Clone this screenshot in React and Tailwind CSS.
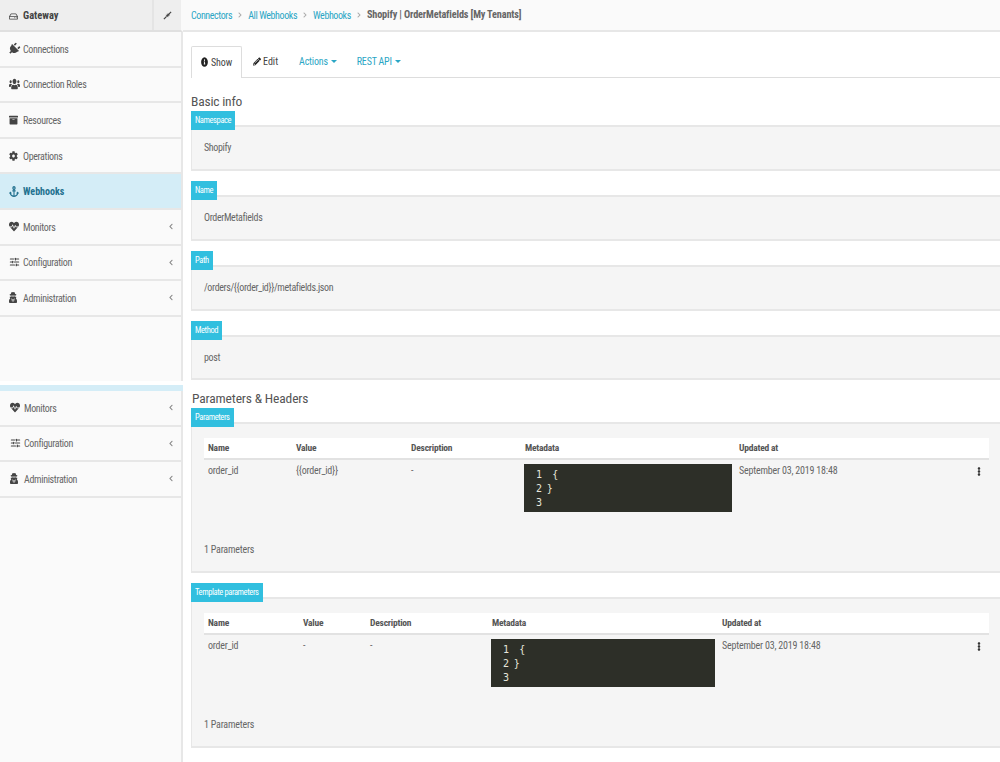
import { FaPlug, FaUsers, FaArchive, FaCog, FaAnchor, FaHeartbeat, FaUserSecret, FaInfoCircle, FaPencilAlt, FaRegHdd, FaEllipsisV, FaChevronLeft, FaChevronRight } from 'react-icons/fa'
import { SlidersHorizontal } from 'lucide-react'

const font = { fontFamily: 'Roboto, "Liberation Sans", Arial, sans-serif' }

function NavRow({ icon: Icon, label, arrow, active, shift, iconClass = 'w-[10px] h-[11px]' }) {
  return (
    <div className={`h-[35.6px] flex items-center border-b-2 border-[#e7e7e7] ${shift ? 'pl-[10px]' : 'pl-[9px]'} pr-[8px] ${active ? 'bg-[#d4edf7] text-[#23718f] font-bold' : 'text-[#666]'}`}>
      <span className={`w-[14px] shrink-0 flex items-center ${active ? '' : 'text-[#444]'}`}>
        <Icon preserveAspectRatio="none" className={iconClass} />
      </span>
      <span className={`text-[10px] leading-none pt-[2px] [font-stretch:75%] ${active ? '' : 'tracking-[-0.35px]'}`}>{label}</span>
      {arrow && <FaChevronLeft className="ml-auto w-[4px] h-[7px] text-[#888]" />}
    </div>
  )
}

function Crumb({ children }) {
  return (
    <>
      <span className="text-[#2ba6c5] text-[10px] tracking-[-0.4px]">{children}</span>
      <FaChevronRight className="w-[4px] h-[6px] mx-[6px] text-[#aaa]" />
    </>
  )
}

function Label({ children }) {
  return (
    <div className="relative z-10 self-start h-[19px] px-[4px] flex items-center bg-[#31bfdf] text-white text-[8.5px] -mb-[5px] tracking-[-0.4px] [font-stretch:75%]">
      {children}
    </div>
  )
}

function Field({ label, value, h = 'h-[46px]' }) {
  return (
    <div className="flex flex-col">
      <Label>{label}</Label>
      <div className={`${h} bg-[#f5f5f5] border-t-2 border-b-2 border-l border-[#e7e7e7] flex items-center pl-[12px] pb-[1px] text-[10px] tracking-[-0.35px] text-[#666] [font-stretch:75%]`}>
        {value}
      </div>
    </div>
  )
}

function CodeBox({ w }) {
  return (
    <div className={`${w} h-[48px] bg-[#2d2f28] text-[#e6e6da] text-[10px] leading-[14px] tracking-[-0.6px] font-['DejaVu_Sans_Mono',monospace] pt-[4px] pl-[12px] whitespace-pre`}>
      <div>1  {'{'}</div>
      <div>2 {'}'}</div>
      <div>3</div>
    </div>
  )
}

function ParamsPanel({ label, cols, value, codeW }) {
  return (
    <div className="flex flex-col">
      <Label>{label}</Label>
      <div className="h-[151px] bg-[#f5f5f5] border-t-2 border-b-2 border-l border-[#e7e7e7] pt-[14px] pl-[12px] pr-[11px] text-[10px] tracking-[-0.2px] text-[#666] [font-stretch:75%]">
        <div className={`grid ${cols} h-[22px] items-center bg-white border-b-2 border-[#e2e2e2] font-bold text-[9.5px] text-[#555]`}>
          <div className="pl-[4px]">Name</div>
          <div>Value</div>
          <div>Description</div>
          <div>Metadata</div>
          <div>Updated at</div>
        </div>
        <div className={`grid ${cols} h-[52px] pt-[3px]`}>
          <div className="pl-[4px]">order_id</div>
          <div>{value}</div>
          <div>-</div>
          <div className="-ml-[1px] pt-[1px]"><CodeBox w={codeW} /></div>
          <div className="flex justify-between items-start">
            <span>September 03, 2019 18:48</span>
            <FaEllipsisV className="w-[8px] h-[9px] mt-[4px] mr-[6px] text-[#333]" />
          </div>
        </div>
        <div className="mt-[30px]">1 Parameters</div>
      </div>
    </div>
  )
}

export default function App() {
  return (
    <div className="w-[1000px] h-[762px] flex bg-white overflow-hidden" style={font}>
      {/* Sidebar */}
      <aside className="w-[183px] shrink-0 flex flex-col">
        <div className="h-[32px] flex items-center bg-[#eeeeee] border-b-2 border-[#e0e0e0] border-r-2 border-r-[#fafafa]">
          <div className="flex-1 flex items-center pl-[9px] pt-[2px] text-[10.5px] font-bold text-[#444] [font-stretch:75%]">
            <FaRegHdd className="w-[9px] h-[9px] mr-[5px]" />
            Gateway
          </div>
          <div className="w-[29px] h-full flex items-center pl-[9px] border-l-2 border-[#e4e4e4]">
            <svg viewBox="0 0 10 10" className="w-[9px] h-[9px] text-[#444]" fill="none" stroke="currentColor">
              <path d="M1 9 L4 6 M6 4 L9 1" strokeWidth="1.4" />
              <path d="M3.2 4.4 L5.6 6.8 L5.6 4.4 Z M4.4 3.2 L6.8 5.6 L6.8 3.2 Z" fill="currentColor" strokeWidth="0.4" />
            </svg>
          </div>
        </div>
        <div className="h-[349px] bg-[#fafafa] border-r-2 border-[#e7e7e7]">
          <NavRow icon={FaPlug} label="Connections" iconClass="w-[10px] h-[12px] rotate-45" />
          <NavRow icon={FaUsers} label="Connection Roles" iconClass="w-[11px] h-[12px]" />
          <NavRow icon={FaArchive} label="Resources" iconClass="w-[9px] h-[10px]" />
          <NavRow icon={FaCog} label="Operations" iconClass="w-[9px] h-[10px]" />
          <NavRow icon={FaAnchor} label="Webhooks" active />
          <NavRow icon={FaHeartbeat} label="Monitors" arrow />
          <NavRow icon={SlidersHorizontal} label="Configuration" arrow iconClass="w-[11px] h-[10px] [stroke-width:2.5]" />
          <NavRow icon={FaUserSecret} label="Administration" arrow iconClass="w-[8px] h-[11px]" />
        </div>
        <div className="h-[4px] bg-white" />
        <div className="h-[6px] bg-[#d4edf7]" />
        <div className="flex-1 bg-[#fafafa] border-r-2 border-[#e7e7e7]">
          <NavRow icon={FaHeartbeat} label="Monitors" arrow shift />
          <NavRow icon={SlidersHorizontal} label="Configuration" arrow shift iconClass="w-[11px] h-[10px] [stroke-width:2.5]" />
          <NavRow icon={FaUserSecret} label="Administration" arrow shift iconClass="w-[8px] h-[11px]" />
        </div>
      </aside>

      {/* Main */}
      <main className="flex-1 min-w-0 flex flex-col">
        <div className="h-[32px] flex items-center bg-[#fafafa] border-b-2 border-[#e7e7e7] pl-[8px] [font-stretch:75%]">
          <Crumb>Connectors</Crumb>
          <Crumb>All Webhooks</Crumb>
          <Crumb>Webhooks</Crumb>
          <span className="font-bold text-[#666] text-[10.25px] tracking-[-0.15px]">Shopify | OrderMetafields [My Tenants]</span>
        </div>

        <div className="pl-[8px]">
          <div className="mt-[14px] h-[32px] flex items-end border-b border-[#ddd] text-[10px] [font-stretch:75%]">
            <div className="h-[32px] w-[51px] -mb-px pb-[1px] flex items-center justify-center bg-white border border-b-0 border-[#ddd] rounded-t-[2px] text-[#444] tracking-[-0.1px]">
              <FaInfoCircle preserveAspectRatio="none" className="w-[7px] h-[10px] mr-[3px] text-[#222]" />Show
            </div>
            <div className="h-full flex items-center ml-[11px] text-[#444]">
              <FaPencilAlt className="w-[8px] h-[9px] mr-[2px] text-[#222]" />Edit
            </div>
            <div className="h-full flex items-center ml-[21px] text-[#2ba6c5] tracking-[-0.2px]">
              Actions<span className="ml-[3px] border-x-[3px] border-t-[3px] border-x-transparent border-t-[#2ba6c5]" />
            </div>
            <div className="h-full flex items-center ml-[20px] text-[#2ba6c5] tracking-[-0.2px]">
              REST API<span className="ml-[3px] border-x-[3px] border-t-[3px] border-x-transparent border-t-[#2ba6c5]" />
            </div>
          </div>

          <h2 className="h-[33px] pt-[15px] text-[13.5px] leading-[16px] tracking-[-0.2px] text-[#555] [font-stretch:75%]">Basic info</h2>

          <div className="flex flex-col gap-[10px]">
            <Field label="Namespace" value="Shopify" />
            <Field label="Name" value="OrderMetafields" />
            <Field label="Path" value="/orders/{{order_id}}/metafields.json" />
            <Field label="Method" value="post" h="h-[45px]" />
          </div>

          <h2 className="h-[28px] pt-[10px] pl-[1px] text-[13.5px] leading-[16px] tracking-[-0.15px] text-[#555] [font-stretch:75%]">Parameters &amp; Headers</h2>

          <div className="flex flex-col gap-[10px]">
            <ParamsPanel label="Parameters" cols="grid-cols-[92px_115px_114px_214px_1fr]" value="{{order_id}}" codeW="w-[208px]" />
            <ParamsPanel label="Template parameters" cols="grid-cols-[99px_67px_122px_230px_1fr]" value="-" codeW="w-[224px]" />
          </div>
        </div>
      </main>
    </div>
  )
}
